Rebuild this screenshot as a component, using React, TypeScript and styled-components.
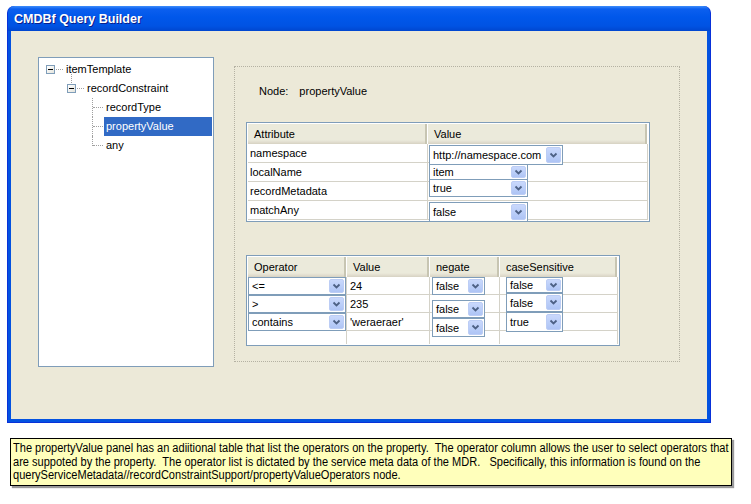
import React from 'react';
import styled, { createGlobalStyle } from 'styled-components';

const GlobalStyle = createGlobalStyle`
  html, body {
    margin: 0;
    padding: 0;
    background: #ffffff;
  }
  body {
    font-family: 'Liberation Sans', Arial, sans-serif;
    font-size: 11px;
    color: #000;
  }
`;

const Page = styled.div`
  width: 751px;
  height: 504px;
  padding: 6px 0 0 7px;
  box-sizing: border-box;
  display: flex;
  flex-direction: column;
`;

const Window = styled.div`
  width: 704px;
  height: 417px;
  display: flex;
  flex-direction: column;
  background: #0352e0;
  border: 1px solid #0831d9;
  border-top: none;
  border-radius: 7px 7px 0 0;
  box-sizing: border-box;
  padding: 0 3px 3px;
`;

const TitleBar = styled.div`
  height: 25px;
  margin: 0 -3px;
  display: flex;
  align-items: center;
  padding-left: 6px;
  border-radius: 7px 7px 0 0;
  background: linear-gradient(
    to bottom,
    #3e8dfb 0%,
    #0b5fef 12%,
    #0057ea 45%,
    #0053e3 80%,
    #0046cf 100%
  );
`;

const Title = styled.span`
  font-family: 'Liberation Sans', Arial, sans-serif;
  font-weight: bold;
  font-size: 12.5px;
  color: #ffffff;
  text-shadow: 1px 1px 0 #0a1e8c;
`;

const Body = styled.div`
  flex: 1;
  background: #ece9d8;
  display: flex;
  align-items: flex-start;
  padding: 26px 0 0 27px;
`;

const TreePanel = styled.div`
  width: 176px;
  height: 310px;
  box-sizing: border-box;
  border: 1px solid #7f9db9;
  background: #ffffff;
  padding-top: 2px;
  display: flex;
  flex-direction: column;
`;

const TreeRow = styled.div<{ $indent: number }>`
  height: 19px;
  display: flex;
  align-items: center;
  padding-left: ${(p) => p.$indent}px;
`;

const Expander = styled.div<{ $lineAbove?: boolean }>`
  position: relative;
  width: 9px;
  height: 9px;
  box-sizing: border-box;
  border: 1px solid #7f9db9;
  background: linear-gradient(135deg, #ffffff 0%, #e4e4dc 100%);
  display: flex;
  align-items: center;
  justify-content: center;

  &::before {
    content: '';
    width: 5px;
    height: 1px;
    background: #000;
  }

  &::after {
    content: '';
    display: ${(p) => (p.$lineAbove ? 'block' : 'none')};
    position: absolute;
    left: 3px;
    bottom: 9px;
    height: 9px;
    border-left: 1px dotted #a0a0a0;
  }
`;

const Stub = styled.div`
  width: 7px;
  margin-left: 1px;
  border-top: 1px dotted #a0a0a0;
`;

const Branch = styled.div<{ $last?: boolean }>`
  position: relative;
  width: 11px;
  height: 19px;

  &::before {
    content: '';
    position: absolute;
    left: 0;
    top: 0;
    height: ${(p) => (p.$last ? '10px' : '19px')};
    border-left: 1px dotted #a0a0a0;
  }

  &::after {
    content: '';
    position: absolute;
    left: 1px;
    right: 0;
    top: 9px;
    border-top: 1px dotted #a0a0a0;
  }
`;

const NodeLabel = styled.div<{ $selected?: boolean; $fill?: boolean }>`
  height: 19px;
  line-height: 19px;
  padding: 0 2px;
  margin-left: 1px;
  font-size: 11px;
  flex: ${(p) => (p.$fill ? 1 : 'none')};
  margin-right: ${(p) => (p.$fill ? '1px' : '0')};
  background: ${(p) => (p.$selected ? '#316ac5' : 'transparent')};
  color: ${(p) => (p.$selected ? '#ffffff' : '#000000')};
`;

const DetailPanel = styled.div`
  width: 446px;
  height: 296px;
  margin: 9px 0 0 20px;
  box-sizing: border-box;
  border: 1px dotted #b4b1a2;
  padding-left: 11px;
  display: flex;
  flex-direction: column;
  align-items: flex-start;
`;

const NodeRow = styled.div`
  margin: 17px 0 0 13px;
  height: 14px;
  display: flex;
  gap: 11px;
  align-items: center;
  font-size: 11px;
`;

const Grid = styled.div<{ $cols: string; $top: number }>`
  margin-top: ${(p) => p.$top}px;
  border: 1px solid #7f9db9;
  padding: 1px;
  display: grid;
  grid-template-columns: ${(p) => p.$cols};
  background: #ffffff;
`;

const HeadCell = styled.div`
  height: 20px;
  box-sizing: border-box;
  display: flex;
  align-items: center;
  padding-left: 6px;
  background: linear-gradient(to bottom, #ebeadb 0%, #ebeadb 80%, #e2ded0 90%, #d6d2c2 100%);
  border-right: 1px solid #ffffff;
  box-shadow: inset -2px 0 0 #c7c5b2;
  font-size: 11px;
`;

const Cell = styled.div<{ $h: number; $pad?: number }>`
  height: ${(p) => p.$h}px;
  box-sizing: border-box;
  border-bottom: 1px solid #d4d2c8;
  border-right: 1px solid #d4d2c8;
  display: flex;
  align-items: center;
  padding-left: ${(p) => p.$pad ?? 2}px;
  font-size: 11px;
  position: relative;
`;

const EditorCell = styled.div<{ $h: number; $pad?: number }>`
  height: ${(p) => p.$h}px;
  box-sizing: border-box;
  border-bottom: 1px solid #d4d2c8;
  border-right: 1px solid #d4d2c8;
  padding-left: ${(p) => p.$pad ?? 1}px;
  display: flex;
  align-items: flex-start;
`;

const EmptyCell = styled.div<{ $h: number }>`
  height: ${(p) => p.$h}px;
  border-right: 1px solid #d4d2c8;
`;

const ComboBox = styled.div<{ $w: number; $h: number; $dy: number }>`
  width: ${(p) => p.$w}px;
  height: ${(p) => p.$h}px;
  margin-top: ${(p) => p.$dy}px;
  flex: none;
  box-sizing: border-box;
  border: 1px solid #7f9db9;
  background: #ffffff;
  display: flex;
  align-items: stretch;
  position: relative;
  font-size: 11px;
`;

const ComboText = styled.div`
  flex: 1;
  display: flex;
  align-items: center;
  padding-left: 3px;
  white-space: nowrap;
  overflow: hidden;
`;

const ComboButton = styled.div`
  width: 15px;
  margin: 1px;
  border-radius: 2px;
  background: linear-gradient(to bottom, #c9d8fc 0%, #b9cdf8 60%, #aec4f5 100%);
  border: 1px solid #bccdf5;
  box-sizing: border-box;
  display: flex;
  align-items: center;
  justify-content: center;
`;

const Note = styled.div`
  width: 722px;
  margin: 15px 0 0 3px;
  box-sizing: border-box;
  border: 1px solid #000000;
  background: #ffffbb;
  box-shadow: 2px 2px 1px #9a9a9a;
  padding: 3px 2px 2px 2px;
  overflow: hidden;
`;

const NoteText = styled.p`
  margin: 0;
  font-family: 'Liberation Sans', Arial, sans-serif;
  font-size: 12px;
  line-height: 13.5px;
  white-space: nowrap;
  transform: scaleX(0.92);
  transform-origin: left center;
`;

const Chevron = () => (
  <svg width="9" height="7" viewBox="0 0 9 7">
    <path d="M1.5 1.5 L4.5 4.5 L7.5 1.5" fill="none" stroke="#4d6185" strokeWidth="1.8" />
  </svg>
);

type ComboProps = { value: string; w: number; h: number; dy?: number };

const Combo = ({ value, w, h, dy = 0 }: ComboProps) => (
  <ComboBox $w={w} $h={h} $dy={dy}>
    <ComboText>{value}</ComboText>
    <ComboButton>
      <Chevron />
    </ComboButton>
  </ComboBox>
);

const attrRows = [
  { name: 'namespace', value: 'http://namespace.com', w: 134, h: 20, dy: 1 },
  { name: 'localName', value: 'item', w: 99, h: 16, dy: 1 },
  { name: 'recordMetadata', value: 'true', w: 99, h: 18, dy: -3 },
  { name: 'matchAny', value: 'false', w: 99, h: 20, dy: 1 },
];

const opRows = [
  {
    op: '<=', value: '24',
    negate: { v: 'false', h: 18, dy: 0 },
    cs: { v: 'false', h: 16, dy: 0 },
  },
  {
    op: '>', value: '235',
    negate: { v: 'false', h: 18, dy: 5 },
    cs: { v: 'false', h: 19, dy: -2 },
  },
  {
    op: 'contains', value: "'weraeraer'",
    negate: { v: 'false', h: 19, dy: 5 },
    cs: { v: 'true', h: 20, dy: -1 },
  },
];

const App = () => {
  return (
    <Page>
      <GlobalStyle />
      <Window>
        <TitleBar>
          <Title>CMDBf Query Builder</Title>
        </TitleBar>
        <Body>
          <TreePanel>
            <TreeRow $indent={7}>
              <Expander />
              <Stub />
              <NodeLabel>itemTemplate</NodeLabel>
            </TreeRow>
            <TreeRow $indent={28}>
              <Expander $lineAbove />
              <Stub />
              <NodeLabel>recordConstraint</NodeLabel>
            </TreeRow>
            <TreeRow $indent={53}>
              <Branch />
              <NodeLabel>recordType</NodeLabel>
            </TreeRow>
            <TreeRow $indent={53}>
              <Branch />
              <NodeLabel $selected $fill>propertyValue</NodeLabel>
            </TreeRow>
            <TreeRow $indent={53}>
              <Branch $last />
              <NodeLabel>any</NodeLabel>
            </TreeRow>
          </TreePanel>

          <DetailPanel>
            <NodeRow>
              <span>Node:</span>
              <span>propertyValue</span>
            </NodeRow>

            <Grid $cols="180px 220px" $top={24}>
              <HeadCell>Attribute</HeadCell>
              <HeadCell>Value</HeadCell>
              {attrRows.map((r) => (
                <React.Fragment key={r.name}>
                  <Cell $h={19}>{r.name}</Cell>
                  <EditorCell $h={19}>
                    <Combo value={r.value} w={r.w} h={r.h} dy={r.dy} />
                  </EditorCell>
                </React.Fragment>
              ))}
            </Grid>

            <Grid $cols="99px 83px 70px 118px" $top={33}>
              <HeadCell>Operator</HeadCell>
              <HeadCell>Value</HeadCell>
              <HeadCell>negate</HeadCell>
              <HeadCell>caseSensitive</HeadCell>
              {opRows.map((r) => (
                <React.Fragment key={r.op}>
                  <EditorCell $h={18} $pad={0}>
                    <Combo value={r.op} w={98} h={18} />
                  </EditorCell>
                  <Cell $h={18} $pad={3}>{r.value}</Cell>
                  <EditorCell $h={18} $pad={2}>
                    <Combo value={r.negate.v} w={53} h={r.negate.h} dy={r.negate.dy} />
                  </EditorCell>
                  <EditorCell $h={18} $pad={6}>
                    <Combo value={r.cs.v} w={57} h={r.cs.h} dy={r.cs.dy} />
                  </EditorCell>
                </React.Fragment>
              ))}
              <EmptyCell $h={13} />
              <EmptyCell $h={13} />
              <EmptyCell $h={13} />
              <EmptyCell $h={13} />
            </Grid>
          </DetailPanel>
        </Body>
      </Window>

      <Note>
        <NoteText>
          The propertyValue panel has an adiitional table that list the operators on the property.&nbsp; The operator column allows the user to select operators that
          <br />
          are suppoted by the property.&nbsp; The operator list is dictated by the service meta data of the MDR.&nbsp;&nbsp; Specifically, this information is found on the
          <br />
          queryServiceMetadata//recordConstraintSupport/propertyValueOperators node.
        </NoteText>
      </Note>
    </Page>
  );
};

export default App;
